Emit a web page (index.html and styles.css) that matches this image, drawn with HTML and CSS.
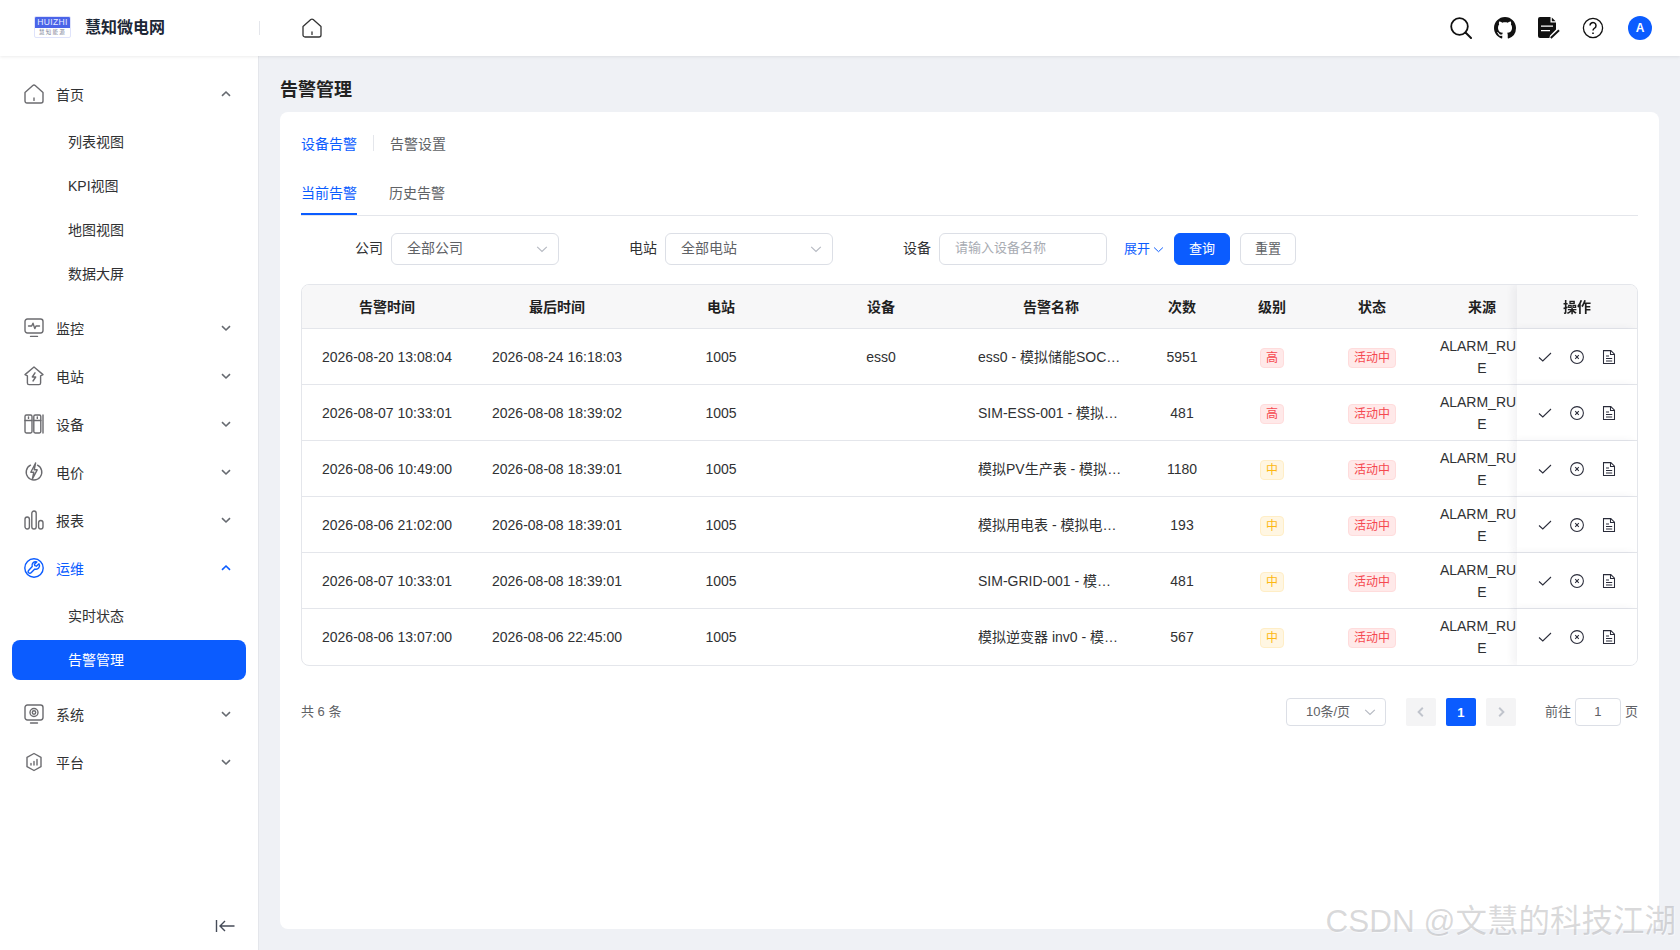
FILE: index.html
```html
<!DOCTYPE html>
<html lang="zh-CN">

<head>
    <meta charset="UTF-8">
    <title>告警管理 - 慧知微电网</title>
    <link rel="stylesheet" href="styles.css">
</head>

<body>
    <svg class="sprite" aria-hidden="true">
        <symbol id="i-home" viewBox="0 0 20 20"><path d="M1 8.6 8.8 1.6a1.8 1.8 0 0 1 2.4 0L19 8.6V17a2 2 0 0 1-2 2H3a2 2 0 0 1-2-2z"/><path d="M10 14v2.4"/></symbol>
        <symbol id="i-monitor" viewBox="0 0 20 20"><rect x="1" y="1" width="18" height="14" rx="2.4"/><path d="M4.5 8h3.2L9 5.2l1.8 5.4L12 8h3.5"/><path d="M6.5 18.4h7"/></symbol>
        <symbol id="i-station" viewBox="0 0 20 20"><path d="M10 1 19 8.6l-2.4 1.2V17a1.6 1.6 0 0 1-1.6 1.6H5A1.6 1.6 0 0 1 3.400 17V9.800L1 8.600z"/><path d="M11 6.800 8.300 11h3.400L9 15"/></symbol>
        <symbol id="i-device" viewBox="0 0 20 20"><rect x="1" y="1" width="7" height="18" rx="1.4"/><rect x="9.800" y="1" width="7" height="18" rx="1.4"/><path d="M19 1v18M1 6.500h7M9.800 6.500h7M4.500 3v1.400M13.300 3v1.400"/></symbol>
        <symbol id="i-price" viewBox="0 0 20 20"><path d="M6.500 3.200a7.800 7.800 0 1 0 7 0"/><path class="solid" d="M11.600 1 6.800 10.200h3l-1.400 6.600 4.800-9h-3z"/></symbol>
        <symbol id="i-report" viewBox="0 0 20 20"><rect x="1" y="7" width="4.400" height="12" rx="2.200"/><rect x="7.800" y="1" width="4.400" height="18" rx="2.200"/><rect x="14.600" y="10.500" width="4.400" height="8.500" rx="2.200"/></symbol>
        <symbol id="i-ops" viewBox="0 0 20 20"><circle cx="10" cy="10" r="9.200"/><path d="M15 5.800l-2.600 2.400-1.500-.5-.5-1.500L12.800 4a3.600 3.600 0 0 0-4.600 4.600l-3.600 3.800a1.700 1.700 0 0 0 2.500 2.400l3.700-3.700A3.600 3.600 0 0 0 15 5.800z"/></symbol>
        <symbol id="i-system" viewBox="0 0 20 20"><rect x="1" y="1" width="18" height="15" rx="2.400"/><circle cx="10" cy="8.500" r="4"/><circle cx="10" cy="8.500" r="1.700"/><path d="M6.500 19h7"/></symbol>
        <symbol id="i-platform" viewBox="0 0 20 20"><path d="M10 1.500 17 5.300v9.400l-7 3.800-7-3.800V5.300z"/><path d="M7 13v-1.500M10 13V9.500M13 13V7.500"/></symbol>
        <symbol id="i-down" viewBox="0 0 10 10"><path d="M1 3.200 5 7l4-3.800"/></symbol>
        <symbol id="i-up" viewBox="0 0 10 10"><path d="M1 6.800 5 3l4 3.800"/></symbol>
        <symbol id="i-check" viewBox="0 0 14 14"><path d="M1 7.500 4.800 11 13 3"/></symbol>
        <symbol id="i-cancel" viewBox="0 0 14 14"><circle cx="7" cy="7" r="6.400"/><path d="M5.200 5.200l3.600 3.600M8.800 5.200l-3.600 3.600"/></symbol>
        <symbol id="i-file" viewBox="0 0 14 14"><path d="M1.500.6h7.300l3.700 3.600v9.200h-11z"/><path d="M8.500.6v3.800h4M4 6h3M4 8.500h6.200M4 11h6.200"/></symbol>
    </svg>

    <header class="topbar">
        <div class="brand">
            <div class="logo">
                <div class="logo-top">HUIZHI</div>
                <div class="logo-bottom">慧知能源</div>
            </div>
            <span class="brand-name">慧知微电网</span>
        </div>
        <span class="topbar-divider"></span>
        <svg class="ico topbar-home"><use href="#i-home"/></svg>
        <div class="topbar-tools">
            <svg class="tool" viewBox="0 0 22 22" fill="none" stroke="#111" stroke-width="1.8"><circle cx="9.500" cy="9.500" r="8.300"/><path d="M15.500 15.500 21 21" stroke-linecap="round" stroke-width="2"/></svg>
            <svg class="tool" viewBox="0 0 16 16" fill="#111"><path d="M8 0C3.580 0 0 3.580 0 8c0 3.540 2.290 6.530 5.470 7.590.4.070.55-.17.55-.38 0-.19-.01-.82-.01-1.490-2.010.37-2.530-.49-2.690-.94-.09-.23-.48-.94-.82-1.130-.28-.15-.68-.52-.01-.53.63-.01 1.080.58 1.230.82.72 1.210 1.870.87 2.330.66.07-.52.28-.87.51-1.070-1.780-.2-3.640-.89-3.640-3.950 0-.87.31-1.590.82-2.150-.08-.2-.36-1.020.08-2.120 0 0 .67-.21 2.200.82.64-.18 1.320-.27 2-.27.68 0 1.360.09 2 .27 1.530-1.040 2.200-.82 2.200-.82.44 1.100.16 1.920.08 2.120.51.56.82 1.270.82 2.150 0 3.070-1.870 3.750-3.650 3.950.29.25.54.73.54 1.480 0 1.070-.01 1.930-.01 2.200 0 .21.15.46.55.38A8.013 8.013 0 0016 8c0-4.420-3.580-8-8-8z"/></svg>
            <svg class="tool" viewBox="0 0 22 22"><path fill="#111" d="M2 0h10.500v5.500H18v7l-6 6-.6 2.500H2a2 2 0 0 1-2-2V2a2 2 0 0 1 2-2z"/><path fill="#111" d="M13.800.4 17.600 4.200h-3.800z"/><path fill="#fff" d="M3 8.500h12v1.300H3zM3 13h9v1.300H3z"/><path fill="none" stroke="#111" stroke-width="2" d="M12.800 21 21 13.300"/></svg>
            <svg class="tool" viewBox="0 0 22 22" fill="none" stroke="#111" stroke-width="1.300"><circle cx="11" cy="11" r="9.600"/><path d="M8 8.600a3 3 0 1 1 4.600 2.500c-1 .6-1.600 1.200-1.600 2.500" stroke-width="1.500"/><path d="M11 15.400v1.500" stroke-width="1.600"/></svg>
            <span class="avatar">A</span>
        </div>
    </header>

    <div class="layout">
        <aside class="sidebar">
            <nav class="nav">
                <div class="nav-item"><svg class="ico"><use href="#i-home"/></svg><span>首页</span><svg class="chev"><use href="#i-up"/></svg></div>
                <div class="nav-sub">
                    <div class="nav-sub-item">列表视图</div>
                    <div class="nav-sub-item">KPI视图</div>
                    <div class="nav-sub-item">地图视图</div>
                    <div class="nav-sub-item">数据大屏</div>
                </div>
                <div class="nav-item"><svg class="ico"><use href="#i-monitor"/></svg><span>监控</span><svg class="chev"><use href="#i-down"/></svg></div>
                <div class="nav-item"><svg class="ico"><use href="#i-station"/></svg><span>电站</span><svg class="chev"><use href="#i-down"/></svg></div>
                <div class="nav-item"><svg class="ico"><use href="#i-device"/></svg><span>设备</span><svg class="chev"><use href="#i-down"/></svg></div>
                <div class="nav-item"><svg class="ico"><use href="#i-price"/></svg><span>电价</span><svg class="chev"><use href="#i-down"/></svg></div>
                <div class="nav-item"><svg class="ico"><use href="#i-report"/></svg><span>报表</span><svg class="chev"><use href="#i-down"/></svg></div>
                <div class="nav-item nav-open"><svg class="ico"><use href="#i-ops"/></svg><span>运维</span><svg class="chev"><use href="#i-up"/></svg></div>
                <div class="nav-sub">
                    <div class="nav-sub-item">实时状态</div>
                    <div class="nav-sub-item nav-active">告警管理</div>
                </div>
                <div class="nav-item"><svg class="ico"><use href="#i-system"/></svg><span>系统</span><svg class="chev"><use href="#i-down"/></svg></div>
                <div class="nav-item"><svg class="ico"><use href="#i-platform"/></svg><span>平台</span><svg class="chev"><use href="#i-down"/></svg></div>
            </nav>
            <div class="collapse">
                <svg width="20" height="14" viewBox="0 0 20 14" fill="none" stroke="#454b58" stroke-width="1.400"><path d="M1.500 1v12M19.500 7H5M10 2 5 7l5 5"/></svg>
            </div>
        </aside>

        <main class="content">
            <h1 class="page-title">告警管理</h1>
            <section class="card">
                <div class="subnav">
                    <span class="subnav-link is-current">设备告警</span>
                    <span class="subnav-sep"></span>
                    <span class="subnav-link">告警设置</span>
                </div>
                <div class="tabs">
                    <span class="tab is-current">当前告警</span>
                    <span class="tab">历史告警</span>
                </div>
                <div class="filters">
                    <label class="filter-label">公司</label>
                    <div class="select"><span class="lift">全部公司</span><svg class="select-arrow"><use href="#i-down"/></svg></div>
                    <label class="filter-label">电站</label>
                    <div class="select"><span class="lift">全部电站</span><svg class="select-arrow"><use href="#i-down"/></svg></div>
                    <label class="filter-label">设备</label>
                    <input class="text-input" placeholder="请输入设备名称">
                    <span class="expand"><span class="lift">展开</span><svg class="expand-arrow"><use href="#i-down"/></svg></span>
                    <button class="btn btn-primary">查询</button>
                    <button class="btn">重置</button>
                </div>

                <div class="table-wrap">
                    <table class="alarm-table">
                        <colgroup>
                            <col class="c-time"><col class="c-time"><col class="c-station"><col class="c-device"><col class="c-name"><col class="c-count"><col class="c-level"><col class="c-state"><col class="c-source"><col class="c-ops">
                        </colgroup>
                        <thead>
                            <tr><th>告警时间</th><th>最后时间</th><th>电站</th><th>设备</th><th>告警名称</th><th>次数</th><th>级别</th><th>状态</th><th>来源</th><th class="fixed">操作</th></tr>
                        </thead>
                        <tbody>
                            <tr>
                                <td>2026-08-20 13:08:04</td><td>2026-08-24 16:18:03</td><td>1005</td><td>ess0</td>
                                <td class="name"><div>ess0 - 模拟储能SOC过低告警</div></td><td>5951</td>
                                <td><span class="tag tag-high">高</span></td><td><span class="tag tag-high">活动中</span></td>
                                <td class="source">ALARM_RU<br>E</td>
                                <td class="fixed"><div class="ops"><svg><use href="#i-check"/></svg><svg><use href="#i-cancel"/></svg><svg><use href="#i-file"/></svg></div></td>
                            </tr>
                            <tr>
                                <td>2026-08-07 10:33:01</td><td>2026-08-08 18:39:02</td><td>1005</td><td></td>
                                <td class="name"><div>SIM-ESS-001 - 模拟储能告警</div></td><td>481</td>
                                <td><span class="tag tag-high">高</span></td><td><span class="tag tag-high">活动中</span></td>
                                <td class="source">ALARM_RU<br>E</td>
                                <td class="fixed"><div class="ops"><svg><use href="#i-check"/></svg><svg><use href="#i-cancel"/></svg><svg><use href="#i-file"/></svg></div></td>
                            </tr>
                            <tr>
                                <td>2026-08-06 10:49:00</td><td>2026-08-08 18:39:01</td><td>1005</td><td></td>
                                <td class="name"><div>模拟PV生产表 - 模拟告警规则</div></td><td>1180</td>
                                <td><span class="tag tag-mid">中</span></td><td><span class="tag tag-high">活动中</span></td>
                                <td class="source">ALARM_RU<br>E</td>
                                <td class="fixed"><div class="ops"><svg><use href="#i-check"/></svg><svg><use href="#i-cancel"/></svg><svg><use href="#i-file"/></svg></div></td>
                            </tr>
                            <tr>
                                <td>2026-08-06 21:02:00</td><td>2026-08-08 18:39:01</td><td>1005</td><td></td>
                                <td class="name"><div>模拟用电表 - 模拟电表告警</div></td><td>193</td>
                                <td><span class="tag tag-mid">中</span></td><td><span class="tag tag-high">活动中</span></td>
                                <td class="source">ALARM_RU<br>E</td>
                                <td class="fixed"><div class="ops"><svg><use href="#i-check"/></svg><svg><use href="#i-cancel"/></svg><svg><use href="#i-file"/></svg></div></td>
                            </tr>
                            <tr>
                                <td>2026-08-07 10:33:01</td><td>2026-08-08 18:39:01</td><td>1005</td><td></td>
                                <td class="name"><div>SIM-GRID-001 - 模拟电网告警</div></td><td>481</td>
                                <td><span class="tag tag-mid">中</span></td><td><span class="tag tag-high">活动中</span></td>
                                <td class="source">ALARM_RU<br>E</td>
                                <td class="fixed"><div class="ops"><svg><use href="#i-check"/></svg><svg><use href="#i-cancel"/></svg><svg><use href="#i-file"/></svg></div></td>
                            </tr>
                            <tr>
                                <td>2026-08-06 13:07:00</td><td>2026-08-06 22:45:00</td><td>1005</td><td></td>
                                <td class="name"><div>模拟逆变器 inv0 - 模拟告警</div></td><td>567</td>
                                <td><span class="tag tag-mid">中</span></td><td><span class="tag tag-high">活动中</span></td>
                                <td class="source">ALARM_RU<br>E</td>
                                <td class="fixed"><div class="ops"><svg><use href="#i-check"/></svg><svg><use href="#i-cancel"/></svg><svg><use href="#i-file"/></svg></div></td>
                            </tr>
                        </tbody>
                    </table>
                </div>

                <div class="pager">
                    <span class="pager-total lift">共 6 条</span>
                    <div class="pager-right">
                        <div class="pager-size"><span class="lift">10条/页</span><svg class="select-arrow"><use href="#i-down"/></svg></div>
                        <span class="page-btn page-arrow page-prev"><svg viewBox="0 0 10 10"><path d="M6.500 1.500 3 5l3.500 3.500"/></svg></span>
                        <span class="page-btn page-current">1</span>
                        <span class="page-btn page-arrow"><svg viewBox="0 0 10 10"><path d="M3.500 1.500 7 5 3.500 8.500"/></svg></span>
                        <span class="pager-goto lift">前往</span>
                        <span class="pager-input">1</span>
                        <span class="pager-unit lift">页</span>
                    </div>
                </div>
            </section>
        </main>
    </div>

    <div class="watermark">CSDN @文慧的科技江湖</div>
</body>

</html>
```

FILE: styles.css
```css
* {
    box-sizing: border-box;
    margin: 0;
    padding: 0;
}

html,
body {
    height: 100%;
    overflow: hidden;
}

body {
    display: flex;
    flex-direction: column;
    position: relative;
    background-color: #eff1f5;
    color: #303133;
    font-family: "Liberation Sans", "Noto Sans CJK SC", sans-serif;
    font-size: 14px;
}

.sprite {
    display: none;
}

/* the CJK face sits a little low in its line box */
.lift {
    padding-bottom: 4px;
}

.ico {
    flex: none;
    width: 20px;
    height: 20px;
    fill: none;
    stroke: #6b6b6f;
    stroke-width: 1.4;
    stroke-linejoin: round;
    stroke-linecap: round;
}

.ico .solid {
    fill: #6b6b6f;
    stroke: none;
}

/* top bar */
.topbar {
    flex: none;
    display: flex;
    align-items: center;
    height: 56px;
    background-color: #fff;
    box-shadow: 0 1px 3px rgba(0, 0, 0, 0.08);
    position: relative;
    z-index: 3;
}

.brand {
    flex: none;
    display: flex;
    align-items: center;
    width: 259px;
    padding: 0 0 2px 34px;
}

.logo {
    width: 37px;
    height: 22px;
    border: 1px solid #dfe3fb;
    border-radius: 2px;
    overflow: hidden;
    text-align: center;
}

.logo-top {
    height: 11px;
    background-color: #4a64e8;
    color: #e8ecff;
    font-size: 8.5px;
    line-height: 11px;
    letter-spacing: 0.4px;
}

.logo-bottom {
    color: #7b8197;
    font-size: 5.5px;
    line-height: 9px;
    letter-spacing: 1.2px;
}

.brand-name {
    margin-left: 14px;
    color: #1d2736;
    font-size: 16px;
    font-weight: 600;
    padding-bottom: 2px;
}

.topbar-divider {
    flex: none;
    width: 1px;
    height: 14px;
    background-color: #e4e6eb;
}

.topbar-home {
    margin-left: 42px;
    stroke: #333;
    stroke-width: 1.3;
}

.topbar-tools {
    display: flex;
    align-items: center;
    gap: 22px;
    margin-left: auto;
    padding-right: 28px;
}

.tool {
    flex: none;
    width: 22px;
    height: 22px;
}

.avatar {
    flex: none;
    width: 24px;
    height: 24px;
    margin-left: 2px;
    border-radius: 50%;
    background-color: #0b5cff;
    color: #fff;
    font-size: 12px;
    font-weight: 700;
    line-height: 24px;
    text-align: center;
}

/* page frame */
.layout {
    flex: 1;
    display: flex;
    min-height: 0;
}

.sidebar {
    flex: none;
    display: flex;
    flex-direction: column;
    width: 259px;
    padding-top: 14px;
    background-color: #fff;
    border-right: 1px solid #e4e6eb;
}

.nav-item {
    display: flex;
    align-items: center;
    height: 48px;
    padding: 0 28px 0 24px;
    color: #303133;
}

.nav-item span {
    margin-left: 12px;
}

.chev {
    width: 10px;
    height: 10px;
    margin-left: auto;
    margin-right: -1px;
    fill: none;
    stroke: #666a70;
    stroke-width: 1.6;
}

.nav-open,
.nav-open span {
    color: #0b5cff;
}

.nav-open .ico,
.nav-open .chev {
    stroke: #0b5cff;
}

.nav-sub {
    display: flex;
    flex-direction: column;
    gap: 4px;
    padding: 4px 12px 10px;
}

.nav-sub-item {
    height: 40px;
    padding-left: 56px;
    border-radius: 8px;
    line-height: 40px;
}

.nav-active {
    background-color: #0b5cff;
    color: #fff;
}

.collapse {
    display: flex;
    justify-content: flex-end;
    margin-top: auto;
    padding: 0 23px 17px 0;
}

.content {
    flex: 1;
    display: flex;
    flex-direction: column;
    min-width: 0;
    padding: 21px 21px 21px 21px;
}

.page-title {
    height: 26px;
    margin-bottom: 9px;
    color: #222;
    font-size: 18px;
    font-weight: 700;
    line-height: 26px;
}

.card {
    flex: 1;
    padding: 20px 21px;
    border-radius: 8px;
    background-color: #fff;
}

/* tabs */
.subnav {
    display: flex;
    align-items: center;
    height: 22px;
}

.subnav-link {
    color: #606266;
}

.subnav-link.is-current,
.tab.is-current {
    color: #0b5cff;
}

.subnav-sep {
    width: 1px;
    height: 16px;
    margin: 0 16px;
    background-color: #e4e6eb;
}

.tabs {
    display: flex;
    gap: 32px;
    height: 45px;
    margin-top: 17px;
    border-bottom: 1px solid #e4e6eb;
}

.tab {
    height: 44px;
    color: #606266;
    line-height: 44px;
}

.tab.is-current {
    border-bottom: 2px solid #0b5cff;
}

/* filter row */
.filters {
    display: flex;
    align-items: center;
    height: 32px;
    margin-top: 17px;
    padding-left: 54px;
}

.filter-label {
    margin-right: 8px;
    padding-bottom: 4px;
    color: #303133;
}

.select,
.text-input {
    width: 168px;
    height: 32px;
    padding: 0 15px;
    border: 1px solid #dcdfe6;
    border-radius: 6px;
    color: #606266;
    font-family: inherit;
    font-size: 14px;
    outline: none;
}

.select {
    display: flex;
    align-items: center;
    justify-content: space-between;
    margin-right: 70px;
    padding-right: 10px;
}

.select-arrow {
    flex: none;
    width: 12px;
    height: 12px;
    fill: none;
    stroke: #b6bac2;
    stroke-width: 1;
}

.text-input {
    padding-bottom: 3px;
    font-size: 13px;
}

.text-input::placeholder {
    color: #a8abb2;
}

.expand {
    display: flex;
    align-items: center;
    margin-left: 17px;
    color: #0b5cff;
    font-size: 13px;
}

.expand-arrow {
    width: 11px;
    height: 11px;
    margin-left: 3px;
    fill: none;
    stroke: #0b5cff;
    stroke-width: 0.9;
}

.btn {
    width: 56px;
    height: 32px;
    margin-left: 10px;
    padding-bottom: 3px;
    border: 1px solid #dcdfe6;
    border-radius: 6px;
    background-color: #fff;
    color: #606266;
    font-family: inherit;
    font-size: 13px;
}

.btn-primary {
    border-color: #0b5cff;
    background-color: #0b5cff;
    color: #fff;
}

/* table */
.table-wrap {
    margin-top: 19px;
    border: 1px solid #e4e6eb;
    border-radius: 8px;
    overflow: hidden;
}

.alarm-table {
    width: 1358px;
    table-layout: fixed;
    border-collapse: separate;
    border-spacing: 0;
}

.c-time { width: 170px; }
.c-station { width: 158px; }
.c-device { width: 162px; }
.c-name { width: 178px; }
.c-count { width: 84px; }
.c-level { width: 96px; }
.c-state { width: 104px; }
.c-source { width: 116px; }
.c-ops { width: 120px; }

.alarm-table th {
    height: 44px;
    padding: 0 16px 2px;
    border-bottom: 1px solid #e4e6eb;
    background-color: #f7f7f8;
    color: #1f1f1f;
    font-weight: 700;
}

.alarm-table td {
    height: 56px;
    padding: 0 16px;
    border-bottom: 1px solid #e4e6eb;
    line-height: 22px;
    text-align: center;
}

.alarm-table tbody tr:last-child td {
    border-bottom: none;
}

.alarm-table td.name {
    text-align: left;
}

.name div {
    overflow: hidden;
    text-overflow: ellipsis;
    white-space: nowrap;
}

.alarm-table td.source {
    text-indent: -8px;
}

.alarm-table .fixed {
    position: sticky;
    right: 0;
    box-shadow: -4px 0 8px rgba(40, 40, 60, 0.06);
}

.alarm-table td.fixed {
    padding: 0;
    background-color: #fff;
}

.tag {
    display: inline-block;
    height: 20px;
    padding: 0 5px;
    border: 1px solid;
    border-radius: 4px;
    font-size: 12px;
    line-height: 18px;
    vertical-align: middle;
}

.tag-high {
    border-color: #ffdcdc;
    background-color: #ffe9e9;
    color: #f5484f;
}

.tag-mid {
    border-color: #ffeec6;
    background-color: #fff6e2;
    color: #fdb813;
}

.ops {
    display: flex;
    justify-content: center;
    gap: 18px;
}

.ops svg {
    width: 14px;
    height: 14px;
    fill: none;
    stroke: #2a2c3a;
    stroke-width: 1.05;
}

/* pagination */
.pager {
    display: flex;
    align-items: center;
    justify-content: space-between;
    margin-top: 32px;
    color: #606266;
    font-size: 13px;
}

.pager-right {
    display: flex;
    align-items: center;
}

.pager-size {
    display: flex;
    align-items: center;
    justify-content: space-between;
    width: 100px;
    height: 28px;
    padding: 0 9px 0 19px;
    border: 1px solid #dcdfe6;
    border-radius: 4px;
}

.page-btn {
    display: flex;
    align-items: center;
    justify-content: center;
    width: 30px;
    height: 28px;
    border-radius: 2px;
    margin-left: 10px;
}

.page-prev {
    margin-left: 20px;
}

.page-arrow {
    background-color: #f4f4f5;
}

.page-arrow svg {
    width: 12px;
    height: 12px;
    fill: none;
    stroke: #c0c4cc;
    stroke-width: 1.6;
}

.page-current {
    background-color: #0b5cff;
    color: #fff;
    font-weight: 700;
}

.pager-goto {
    margin-left: 29px;
}

.pager-input {
    width: 46px;
    height: 28px;
    margin: 0 4px;
    border: 1px solid #dcdfe6;
    border-radius: 4px;
    line-height: 26px;
    text-align: center;
}

/* image watermark, sits over the page corner */
.watermark {
    position: absolute;
    right: 4px;
    bottom: 11px;
    color: rgba(120, 120, 125, 0.28);
    font-size: 31.5px;
    line-height: 36px;
    text-shadow: 1px 1px 1px rgba(255, 255, 255, 0.5);
    white-space: nowrap;
}
```
